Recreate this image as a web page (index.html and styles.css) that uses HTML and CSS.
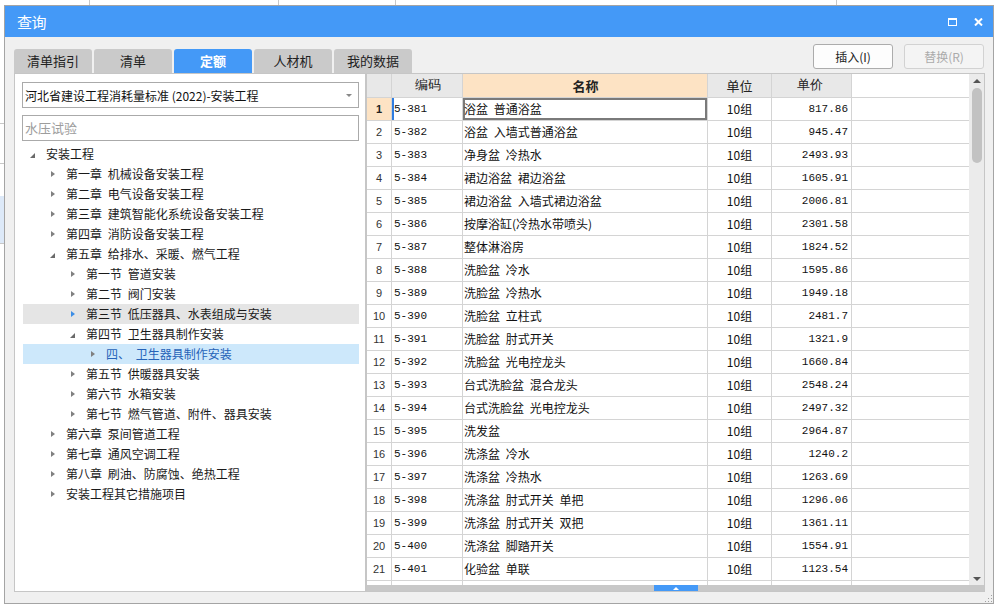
FILE: index.html
```html
<!DOCTYPE html>
<html lang="zh">
<head>
<meta charset="utf-8">
<title>查询</title>
<link rel="stylesheet" href="styles.css">
</head>
<body>
<div class="backdrop"></div>
<div class="dialog">
  <div class="titlebar">
    <span class="title">查询</span>
    <div class="win-ctrls">
      <svg class="ico-max" width="9" height="8" viewBox="0 0 9 8"><rect x="0.5" y="1" width="8" height="6.5" fill="none" stroke="#fff" stroke-width="1"/><rect x="0" y="0" width="9" height="2" fill="#fff"/></svg>
      <svg class="ico-close" width="9" height="8" viewBox="0 0 9 8"><path d="M1 0.5 L8 7.5 M8 0.5 L1 7.5" stroke="#fff" stroke-width="2" fill="none"/></svg>
    </div>
  </div>
  <div class="toolbar">
    <div class="tabs">
      <div class="tab">清单指引</div>
      <div class="tab">清单</div>
      <div class="tab active">定额</div>
      <div class="tab">人材机</div>
      <div class="tab">我的数据</div>
    </div>
    <div class="actions">
      <button class="btn">插入(I)</button>
      <button class="btn disabled">替换(R)</button>
    </div>
  </div>
  <div class="main">
    <div class="left-panel">
      <div class="select"><span>河北省建设工程消耗量标准 (2022)-安装工程</span><span class="caret"></span></div>
      <div class="search">水压试验</div>
      <ul class="tree">
        <li class="node l0"><span class="tw"><i class="exp"></i></span>安装工程</li>
        <li class="node l1"><span class="tw"><i class="col"></i></span>第一章 机械设备安装工程</li>
        <li class="node l1"><span class="tw"><i class="col"></i></span>第二章 电气设备安装工程</li>
        <li class="node l1"><span class="tw"><i class="col"></i></span>第三章 建筑智能化系统设备安装工程</li>
        <li class="node l1"><span class="tw"><i class="col"></i></span>第四章 消防设备安装工程</li>
        <li class="node l1"><span class="tw"><i class="exp"></i></span>第五章 给排水、采暖、燃气工程</li>
        <li class="node l2"><span class="tw"><i class="col"></i></span>第一节 管道安装</li>
        <li class="node l2"><span class="tw"><i class="col"></i></span>第二节 阀门安装</li>
        <li class="node l2 hover"><span class="tw"><i class="col"></i></span>第三节 低压器具、水表组成与安装</li>
        <li class="node l2"><span class="tw"><i class="exp"></i></span>第四节 卫生器具制作安装</li>
        <li class="node l3 selected"><span class="tw"><i class="col"></i></span>四、 卫生器具制作安装</li>
        <li class="node l2"><span class="tw"><i class="col"></i></span>第五节 供暖器具安装</li>
        <li class="node l2"><span class="tw"><i class="col"></i></span>第六节 水箱安装</li>
        <li class="node l2"><span class="tw"><i class="col"></i></span>第七节 燃气管道、附件、器具安装</li>
        <li class="node l1"><span class="tw"><i class="col"></i></span>第六章 泵间管道工程</li>
        <li class="node l1"><span class="tw"><i class="col"></i></span>第七章 通风空调工程</li>
        <li class="node l1"><span class="tw"><i class="col"></i></span>第八章 刷油、防腐蚀、绝热工程</li>
        <li class="node l1"><span class="tw"><i class="col"></i></span>安装工程其它措施项目</li>
      </ul>
    </div>
    <div class="right-panel">
      <div class="grid-area">
        <div class="grid">
          <div class="row head">
            <div class="c c-no"></div>
            <div class="c c-code">编码</div>
            <div class="c c-name">名称</div>
            <div class="c c-unit">单位</div>
            <div class="c c-price">单价</div>
          </div>
          <div class="row current"><div class="c c-no">1</div><div class="c c-code">5-381</div><div class="c c-name">浴盆 普通浴盆</div><div class="c c-unit">10组</div><div class="c c-price">817.86</div></div>
          <div class="row"><div class="c c-no">2</div><div class="c c-code">5-382</div><div class="c c-name">浴盆 入墙式普通浴盆</div><div class="c c-unit">10组</div><div class="c c-price">945.47</div></div>
          <div class="row"><div class="c c-no">3</div><div class="c c-code">5-383</div><div class="c c-name">净身盆 冷热水</div><div class="c c-unit">10组</div><div class="c c-price">2493.93</div></div>
          <div class="row"><div class="c c-no">4</div><div class="c c-code">5-384</div><div class="c c-name">裙边浴盆 裙边浴盆</div><div class="c c-unit">10组</div><div class="c c-price">1605.91</div></div>
          <div class="row"><div class="c c-no">5</div><div class="c c-code">5-385</div><div class="c c-name">裙边浴盆 入墙式裙边浴盆</div><div class="c c-unit">10组</div><div class="c c-price">2006.81</div></div>
          <div class="row"><div class="c c-no">6</div><div class="c c-code">5-386</div><div class="c c-name">按摩浴缸(冷热水带喷头)</div><div class="c c-unit">10组</div><div class="c c-price">2301.58</div></div>
          <div class="row"><div class="c c-no">7</div><div class="c c-code">5-387</div><div class="c c-name">整体淋浴房</div><div class="c c-unit">10组</div><div class="c c-price">1824.52</div></div>
          <div class="row"><div class="c c-no">8</div><div class="c c-code">5-388</div><div class="c c-name">洗脸盆 冷水</div><div class="c c-unit">10组</div><div class="c c-price">1595.86</div></div>
          <div class="row"><div class="c c-no">9</div><div class="c c-code">5-389</div><div class="c c-name">洗脸盆 冷热水</div><div class="c c-unit">10组</div><div class="c c-price">1949.18</div></div>
          <div class="row"><div class="c c-no">10</div><div class="c c-code">5-390</div><div class="c c-name">洗脸盆 立柱式</div><div class="c c-unit">10组</div><div class="c c-price">2481.7</div></div>
          <div class="row"><div class="c c-no">11</div><div class="c c-code">5-391</div><div class="c c-name">洗脸盆 肘式开关</div><div class="c c-unit">10组</div><div class="c c-price">1321.9</div></div>
          <div class="row"><div class="c c-no">12</div><div class="c c-code">5-392</div><div class="c c-name">洗脸盆 光电控龙头</div><div class="c c-unit">10组</div><div class="c c-price">1660.84</div></div>
          <div class="row"><div class="c c-no">13</div><div class="c c-code">5-393</div><div class="c c-name">台式洗脸盆 混合龙头</div><div class="c c-unit">10组</div><div class="c c-price">2548.24</div></div>
          <div class="row"><div class="c c-no">14</div><div class="c c-code">5-394</div><div class="c c-name">台式洗脸盆 光电控龙头</div><div class="c c-unit">10组</div><div class="c c-price">2497.32</div></div>
          <div class="row"><div class="c c-no">15</div><div class="c c-code">5-395</div><div class="c c-name">洗发盆</div><div class="c c-unit">10组</div><div class="c c-price">2964.87</div></div>
          <div class="row"><div class="c c-no">16</div><div class="c c-code">5-396</div><div class="c c-name">洗涤盆 冷水</div><div class="c c-unit">10组</div><div class="c c-price">1240.2</div></div>
          <div class="row"><div class="c c-no">17</div><div class="c c-code">5-397</div><div class="c c-name">洗涤盆 冷热水</div><div class="c c-unit">10组</div><div class="c c-price">1263.69</div></div>
          <div class="row"><div class="c c-no">18</div><div class="c c-code">5-398</div><div class="c c-name">洗涤盆 肘式开关 单把</div><div class="c c-unit">10组</div><div class="c c-price">1296.06</div></div>
          <div class="row"><div class="c c-no">19</div><div class="c c-code">5-399</div><div class="c c-name">洗涤盆 肘式开关 双把</div><div class="c c-unit">10组</div><div class="c c-price">1361.11</div></div>
          <div class="row"><div class="c c-no">20</div><div class="c c-code">5-400</div><div class="c c-name">洗涤盆 脚踏开关</div><div class="c c-unit">10组</div><div class="c c-price">1554.91</div></div>
          <div class="row"><div class="c c-no">21</div><div class="c c-code">5-401</div><div class="c c-name">化验盆 单联</div><div class="c c-unit">10组</div><div class="c c-price">1123.54</div></div>
          <div class="row"><div class="c c-no"></div><div class="c c-code"></div><div class="c c-name"></div><div class="c c-unit"></div><div class="c c-price"></div></div>
        </div>
        <div class="vscroll">
          <span class="arr-up"></span>
          <span class="thumb"></span>
          <span class="spacer"></span>
          <span class="arr-down"></span>
        </div>
      </div>
      <div class="hbar"><span class="handle"><i></i></span></div>
    </div>
  </div>
  <div class="grip"></div>
</div>
</body>
</html>
```
FILE: styles.css
```css
html, body {
  margin: 0;
  padding: 0;
}
body {
  width: 995px;
  height: 605px;
  position: relative;
  overflow: hidden;
  background: #ffffff;
  font-family: "Noto Sans CJK SC", "Noto Sans", sans-serif;
  color: #1a1a1a;
}
.backdrop {
  position: absolute;
  inset: 0;
  background:
    linear-gradient(#dde9f8, #dde9f8) 0 196px / 4px 47px no-repeat,
    linear-gradient(#c8c8c8, #c8c8c8) 0 123px / 4px 1px no-repeat,
    linear-gradient(#c8c8c8, #c8c8c8) 0 163px / 4px 1px no-repeat,
    linear-gradient(#c8c8c8, #c8c8c8) 0 196px / 4px 1px no-repeat,
    linear-gradient(#c8c8c8, #c8c8c8) 0 243px / 4px 1px no-repeat,
    linear-gradient(#c8c8c8, #c8c8c8) 89px 0 / 1px 5px no-repeat,
    linear-gradient(#c8c8c8, #c8c8c8) 278px 0 / 1px 5px no-repeat,
    linear-gradient(#c8c8c8, #c8c8c8) 395px 0 / 1px 5px no-repeat,
    linear-gradient(#c8c8c8, #c8c8c8) 836px 0 / 1px 5px no-repeat,
    #ffffff;
}

/* dialog window */
.dialog {
  position: absolute;
  left: 4px;
  top: 5px;
  width: 990px;
  height: 599px;
  box-sizing: border-box;
  border: 1px solid #a4a4a4;
  background: #f0f0f0;
  display: flex;
  flex-direction: column;
}
.titlebar {
  height: 31px;
  flex: none;
  background: #4499f7;
  color: #fff;
  display: flex;
  align-items: center;
  justify-content: space-between;
  padding: 0 10px 0 12px;
}
.title {
  font-size: 15px;
  line-height: 1;
  letter-spacing: -0.5px;
}
.win-ctrls {
  display: flex;
  align-items: center;
  gap: 17px;
  padding-top: 1px;
}
.win-ctrls svg { display: block; }

/* toolbar */
.toolbar {
  height: 36px;
  flex: none;
  display: flex;
  justify-content: space-between;
  padding: 0 9px;
}
.tabs {
  display: flex;
  gap: 2px;
  align-self: flex-end;
}
.tab {
  width: 78px;
  height: 24px;
  line-height: 24px;
  text-align: center;
  font-size: 13px;
  background: #cacaca;
  color: #222;
  border-radius: 3px 3px 0 0;
}
.tab.active {
  background: #4499f7;
  color: #fff;
  font-weight: bold;
}
.actions {
  display: flex;
  gap: 11px;
  padding-top: 7px;
}
.btn {
  width: 80px;
  height: 25px;
  box-sizing: border-box;
  border: 1px solid #acacac;
  border-radius: 3px;
  background: #fdfdfd;
  font-family: "Noto Sans CJK SC", "Noto Sans", sans-serif;
  font-size: 12px;
  color: #222;
  padding: 0;
  line-height: 23px;
}
.btn.disabled {
  color: #ababab;
  border-color: #d2d2d2;
  background: #f4f4f4;
}

/* main area */
.main {
  height: 519px;
  flex: none;
  display: flex;
  padding: 0 8px 0 9px;
}
.left-panel {
  width: 352px;
  box-sizing: border-box;
  border: 1px solid #c6c6c6;
  background: #fff;
  display: flex;
  flex-direction: column;
}
.select {
  margin: 8px 0 0 7px;
  width: 337px;
  height: 26px;
  box-sizing: border-box;
  border: 1px solid #aaaaaa;
  display: flex;
  align-items: center;
  justify-content: space-between;
  padding: 0 6px 0 2px;
  font-size: 12px;
  color: #111;
}
.caret {
  width: 0;
  height: 0;
  border-top: 3px solid #888;
  border-left: 3px solid transparent;
  border-right: 3px solid transparent;
}
.search {
  margin: 7px 0 0 7px;
  width: 337px;
  height: 26px;
  box-sizing: border-box;
  border: 1px solid #aaaaaa;
  padding-left: 2px;
  font-size: 13px;
  line-height: 24px;
  color: #9d9d9d;
}
.tree {
  list-style: none;
  margin: 3px 0 0 8px;
  padding: 0;
  width: 336px;
}
.node {
  height: 20px;
  line-height: 20px;
  font-size: 12px;
  word-spacing: 3px;
  display: flex;
  align-items: center;
  white-space: pre;
  color: #1a1a1a;
}
.node.l0 { padding-left: 7px; }
.node.l1 { padding-left: 27px; }
.node.l2 { padding-left: 47px; }
.node.l3 { padding-left: 67px; }
.node.hover { background: #e5e5e5; }
.node.selected { background: #cde8fb; color: #2563b8; }
.tw {
  width: 16px;
  height: 20px;
  flex: none;
  display: flex;
  align-items: center;
}
.tw i { display: block; width: 0; height: 0; }
.tw i.col {
  border-left: 4px solid #808080;
  border-top: 3.5px solid transparent;
  border-bottom: 3.5px solid transparent;
  margin-left: 1px;
}
.node.hover .tw i.col { border-left-color: #3d8ee6; }
.tw i.exp {
  border-bottom: 5px solid #6a6a6a;
  border-left: 5px solid transparent;
  margin-top: 2px;
}

/* right panel */
.right-panel {
  width: 619px;
  box-sizing: border-box;
  border: 1px solid #c6c6c6;
  background: #fff;
  display: flex;
  flex-direction: column;
}
.grid-area {
  height: 511px;
  display: flex;
}
.grid {
  width: 602px;
  overflow: hidden;
}
.row {
  display: flex;
  height: 23px;
  box-sizing: border-box;
  border-bottom: 1px solid #d4d4d4;
}
.row.head {
  height: 24px;
}
.c {
  box-sizing: border-box;
  border-right: 1px solid #d4d4d4;
  font-size: 12px;
  line-height: 22px;
  white-space: nowrap;
  overflow: hidden;
  flex: none;
}
.head .c {
  background: #e8e8e8;
  font-size: 13px;
  line-height: 23px;
  text-align: center;
  color: #222;
}
.head .c.c-name {
  background: #fde3c4;
  font-weight: bold;
}
.c-no {
  width: 25px;
  text-align: center;
  font-family: "Liberation Sans", sans-serif;
  font-size: 11px;
  color: #333;
}
.c-code {
  width: 71px;
  padding-left: 2px;
  font-family: "Liberation Mono", monospace;
  font-size: 11px;
  color: #111;
}
.c-name {
  width: 245px;
  padding-left: 1px;
  word-spacing: 3px;
  color: #111;
}
.c-unit {
  width: 64px;
  text-align: center;
  color: #111;
}
.c-price {
  width: 80px;
  text-align: right;
  padding-right: 3px;
  font-family: "Liberation Mono", monospace;
  font-size: 11px;
  color: #111;
}
.row.current .c-no {
  background: #fde3c4;
  font-weight: bold;
  color: #222;
}
.row.current .c-code {
  box-shadow: inset 2px 0 0 #2f7de1;
}
.row.current .c-name {
  box-shadow: inset 0 0 0 2px #7a7a7a;
}

.vscroll {
  width: 15px;
  background: #ebebeb;
  display: flex;
  flex-direction: column;
  align-items: center;
  padding: 5px 0 4px;
  box-sizing: border-box;
}
.arr-up {
  width: 0; height: 0;
  border-bottom: 4px solid #555;
  border-left: 4px solid transparent;
  border-right: 4px solid transparent;
  flex: none;
}
.thumb {
  margin-top: 5px;
  width: 10px;
  height: 75px;
  border-radius: 5px;
  background: #c2c2c2;
  flex: none;
}
.spacer { flex: 1; }
.arr-down {
  width: 0; height: 0;
  border-top: 4px solid #555;
  border-left: 4px solid transparent;
  border-right: 4px solid transparent;
  flex: none;
}
.hbar {
  height: 6px;
  background: #c8c8c8;
  display: flex;
  justify-content: center;
}
.handle {
  width: 44px;
  height: 6px;
  background: #4499f7;
  display: flex;
  justify-content: center;
  align-items: center;
}
.handle i {
  width: 0; height: 0;
  border-bottom: 3px solid #fff;
  border-left: 3px solid transparent;
  border-right: 3px solid transparent;
}
.grip {
  position: absolute;
  right: 1px;
  bottom: 1px;
  width: 8px;
  height: 8px;
  background:
    radial-gradient(circle, #a0a0a0 0.8px, transparent 1px) 0 0 / 3px 3px;
  clip-path: polygon(100% 0, 100% 100%, 0 100%);
}
```
